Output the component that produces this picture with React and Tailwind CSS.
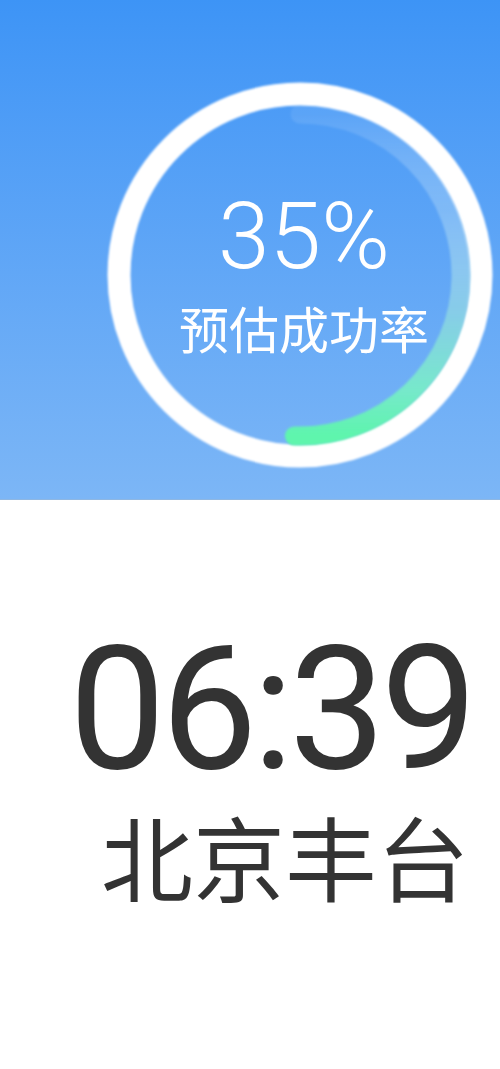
export default function App() {
  return (
    <div className="w-[500px] h-[1069px] bg-white overflow-hidden">
      {/* top blue panel with success ring */}
      <div className="h-[500px] bg-gradient-to-b from-[#3d94f6] to-[#7cb6f6] border-b border-[#8fb7e2] pt-[75px] pl-[100px]">
        <div className="grid w-[400px] h-[400px]">
          <svg width="400" height="400" viewBox="0 0 400 400" className="col-start-1 row-start-1">
            <defs>
              <linearGradient id="arc" x1="0" y1="39" x2="0" y2="361" gradientUnits="userSpaceOnUse">
                <stop offset="0" stopColor="#ffffff" stopOpacity="0.08" />
                <stop offset="0.3" stopColor="#b7dcf7" stopOpacity="0.4" />
                <stop offset="0.6" stopColor="#8bcfe8" stopOpacity="0.9" />
                <stop offset="0.85" stopColor="#78e8cc" />
                <stop offset="1" stopColor="#5ef5ad" />
              </linearGradient>
              <filter id="soft" x="-10%" y="-10%" width="120%" height="120%">
                <feGaussianBlur stdDeviation="1.2" />
              </filter>
            </defs>
            <circle cx="200" cy="200" r="181" fill="none" stroke="#ffffff" strokeWidth="23" filter="url(#soft)" />
            <path
              d="M200 39 A161 161 0 1 1 194.4 360.9"
              fill="none"
              stroke="url(#arc)"
              strokeWidth="19"
              strokeLinecap="round"
              filter="url(#soft)"
            />
          </svg>
          <div className="col-start-1 row-start-1 flex flex-col items-center pt-[115px] pl-[8px] text-white">
            <div className="text-[93px] leading-none font-light font-['Roboto',sans-serif]">35%</div>
            <div className="mt-[19px] text-[50px] leading-none font-['Noto_Sans_CJK_SC',sans-serif]">预估成功率</div>
          </div>
        </div>
      </div>

      {/* time and place */}
      <div className="flex flex-col text-[#333333]">
        <div className="mt-[136px] pl-[69px] text-[172px] leading-[0.85] tracking-[-5px] font-['Roboto',sans-serif]">06:39</div>
        <div className="mt-[27px] pl-[101px] text-[92px] leading-none font-['Noto_Sans_CJK_SC',sans-serif]">北京丰台</div>
      </div>
    </div>
  );
}
